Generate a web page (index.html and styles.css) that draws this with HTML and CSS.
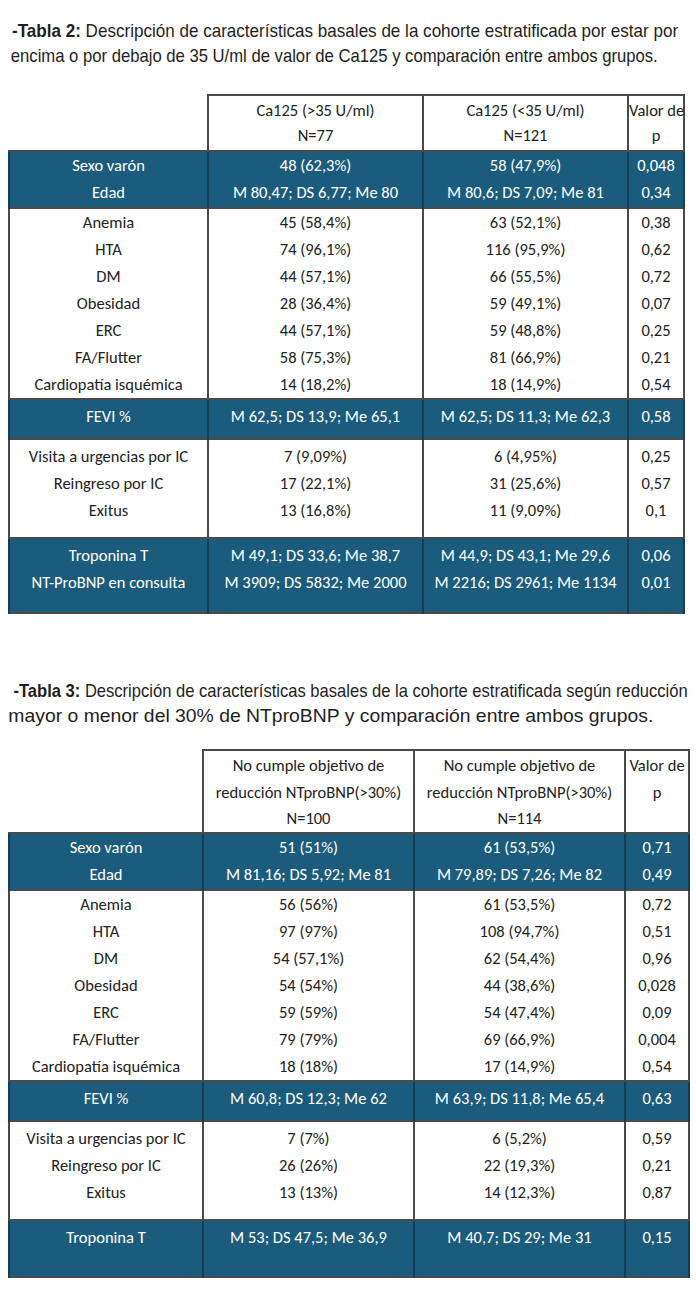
FILE: index.html
```html
<!DOCTYPE html>
<html lang="es">
<head>
<meta charset="utf-8">
<title>Tablas</title>
<link rel="stylesheet" href="styles.css">
</head>
<body>
<div class="page">
  <div class="caption cap2">
    <p class="line l1"><b>-Tabla 2:</b> Descripción de características basales de la cohorte estratificada por estar por</p>
    <p class="line l2">encima o por debajo de 35 U/ml de valor de Ca125 y comparación entre ambos grupos.</p>
  </div>
  <table class="data t2">
    <colgroup><col class="c1"><col class="c2"><col class="c3"><col class="c4"></colgroup>
    <thead>
      <tr><th class="blank"></th><th>Ca125 (&gt;35 U/ml)<br>N=77</th><th>Ca125 (&lt;35 U/ml)<br>N=121</th><th>Valor de<br>p</th></tr>
    </thead>
    <tbody class="dark g-a">
      <tr><td>Sexo varón</td><td>48 (62,3%)</td><td>58 (47,9%)</td><td>0,048</td></tr>
      <tr><td>Edad</td><td>M 80,47; DS 6,77; Me 80</td><td>M 80,6; DS 7,09; Me 81</td><td>0,34</td></tr>
    </tbody>
    <tbody class="light g-b">
      <tr><td>Anemia</td><td>45 (58,4%)</td><td>63 (52,1%)</td><td>0,38</td></tr>
      <tr><td>HTA</td><td>74 (96,1%)</td><td>116 (95,9%)</td><td>0,62</td></tr>
      <tr><td>DM</td><td>44 (57,1%)</td><td>66 (55,5%)</td><td>0,72</td></tr>
      <tr><td>Obesidad</td><td>28 (36,4%)</td><td>59 (49,1%)</td><td>0,07</td></tr>
      <tr><td>ERC</td><td>44 (57,1%)</td><td>59 (48,8%)</td><td>0,25</td></tr>
      <tr><td>FA/Flutter</td><td>58 (75,3%)</td><td>81 (66,9%)</td><td>0,21</td></tr>
      <tr><td>Cardiopatía isquémica</td><td>14 (18,2%)</td><td>18 (14,9%)</td><td>0,54</td></tr>
    </tbody>
    <tbody class="dark g-c">
      <tr><td>FEVI %</td><td>M 62,5; DS 13,9; Me 65,1</td><td>M 62,5; DS 11,3; Me 62,3</td><td>0,58</td></tr>
    </tbody>
    <tbody class="light g-d">
      <tr><td>Visita a urgencias por IC</td><td>7 (9,09%)</td><td>6 (4,95%)</td><td>0,25</td></tr>
      <tr><td>Reingreso por IC</td><td>17 (22,1%)</td><td>31 (25,6%)</td><td>0,57</td></tr>
      <tr><td>Exitus</td><td>13 (16,8%)</td><td>11 (9,09%)</td><td>0,1</td></tr>
    </tbody>
    <tbody class="dark g-e">
      <tr><td>Troponina T</td><td>M 49,1; DS 33,6; Me 38,7</td><td>M 44,9; DS 43,1; Me 29,6</td><td>0,06</td></tr>
      <tr><td>NT-ProBNP en consulta</td><td>M 3909; DS 5832; Me 2000</td><td>M 2216; DS 2961; Me 1134</td><td>0,01</td></tr>
    </tbody>
  </table>

  <div class="caption cap3">
    <p class="line l1"><b>-Tabla 3:</b> Descripción de características basales de la cohorte estratificada según reducción</p>
    <p class="line l2">mayor o menor del 30% de NTproBNP y comparación entre ambos grupos.</p>
  </div>
  <table class="data t3">
    <colgroup><col class="c1"><col class="c2"><col class="c3"><col class="c4"></colgroup>
    <thead>
      <tr><th class="blank"></th><th>No cumple objetivo de<br>reducción NTproBNP(&gt;30%)<br>N=100</th><th>No cumple objetivo de<br>reducción NTproBNP(&gt;30%)<br>N=114</th><th>Valor de<br>p<br>&nbsp;</th></tr>
    </thead>
    <tbody class="dark g-a">
      <tr><td>Sexo varón</td><td>51 (51%)</td><td>61 (53,5%)</td><td>0,71</td></tr>
      <tr><td>Edad</td><td>M 81,16; DS 5,92; Me 81</td><td>M 79,89; DS 7,26; Me 82</td><td>0,49</td></tr>
    </tbody>
    <tbody class="light g-b">
      <tr><td>Anemia</td><td>56 (56%)</td><td>61 (53,5%)</td><td>0,72</td></tr>
      <tr><td>HTA</td><td>97 (97%)</td><td>108 (94,7%)</td><td>0,51</td></tr>
      <tr><td>DM</td><td>54 (57,1%)</td><td>62 (54,4%)</td><td>0,96</td></tr>
      <tr><td>Obesidad</td><td>54 (54%)</td><td>44 (38,6%)</td><td>0,028</td></tr>
      <tr><td>ERC</td><td>59 (59%)</td><td>54 (47,4%)</td><td>0,09</td></tr>
      <tr><td>FA/Flutter</td><td>79 (79%)</td><td>69 (66,9%)</td><td>0,004</td></tr>
      <tr><td>Cardiopatía isquémica</td><td>18 (18%)</td><td>17 (14,9%)</td><td>0,54</td></tr>
    </tbody>
    <tbody class="dark g-c">
      <tr><td>FEVI %</td><td>M 60,8; DS 12,3; Me 62</td><td>M 63,9; DS 11,8; Me 65,4</td><td>0,63</td></tr>
    </tbody>
    <tbody class="light g-d">
      <tr><td>Visita a urgencias por IC</td><td>7 (7%)</td><td>6 (5,2%)</td><td>0,59</td></tr>
      <tr><td>Reingreso por IC</td><td>26 (26%)</td><td>22 (19,3%)</td><td>0,21</td></tr>
      <tr><td>Exitus</td><td>13 (13%)</td><td>14 (12,3%)</td><td>0,87</td></tr>
    </tbody>
    <tbody class="dark g-f">
      <tr><td>Troponina T</td><td>M 53; DS 47,5; Me 36,9</td><td>M 40,7; DS 29; Me 31</td><td>0,15</td></tr>
    </tbody>
  </table>
</div>
</body>
</html>
```

FILE: styles.css
```css
html, body {
  margin: 0;
  padding: 0;
  background: #ffffff;
}

.page {
  width: 696px;
  padding: 18px 0 0 0;
  box-sizing: border-box;
  overflow: hidden;
}

.caption {
  height: 50px;
  width: 696px;
  overflow: visible;
}

.line {
  margin: 0;
  width: 800px;
  height: 25px;
  white-space: nowrap;
  font-family: "Liberation Sans", Arial, sans-serif;
  font-size: 18.5px;
  line-height: 25px;
  color: #1e1e1e;
  transform-origin: 0 0;
}

.cap2 .l1 { padding-left: 13px; transform: scaleX(0.922); }
.cap2 .l2 { padding-left: 12px; transform: scaleX(0.900); }

.cap3 {
  margin-top: 64px;
}

.cap3 .l1 { padding-left: 15px; transform: scaleX(0.895); }
.cap3 .l2 { padding-left: 8px; transform: scaleX(1.046); }

.data {
  border-collapse: collapse;
  table-layout: fixed;
  margin-left: 8px;
  font-family: "Carlito", "Lato", "Open Sans", sans-serif;
  font-size: 16.5px;
  color: #222222;
}

.t2 {
  width: 675px;
  margin-top: 26px;
}

.t3 {
  width: 680px;
  margin-top: 21px;
}

.t2 .c1 { width: 199px; }
.t2 .c2 { width: 215px; }
.t2 .c3 { width: 205px; }
.t2 .c4 { width: 56px; }

.t3 .c1 { width: 194px; }
.t3 .c2 { width: 211px; }
.t3 .c3 { width: 211px; }
.t3 .c4 { width: 64px; }

.data th {
  font-weight: normal;
  text-align: center;
  vertical-align: top;
  border: 2px solid #4a4a4a;
  padding: 2px 0 2px 0;
  line-height: 25px;
  white-space: nowrap;
}

.t3 th {
  line-height: 26.5px;
  padding: 1px 0 0 0;
}

.data th.blank {
  border: none;
  border-bottom: 2px solid #4a4a4a;
}

.data td {
  text-align: center;
  padding: 0;
  line-height: 27px;
  white-space: nowrap;
  border-left: 2px solid #4a4a4a;
  border-right: 2px solid #4a4a4a;
}

.data tbody {
  border: 2px solid #4a4a4a;
}

.dark td {
  background: #1b5b7c;
  color: #ffffff;
  border-left-color: #123f57;
  border-right-color: #123f57;
}

.light td {
  background: #ffffff;
}

/* group vertical paddings */
.g-a tr:first-child td { padding-top: 0; }
.g-a tr:last-child td { padding-bottom: 1px; }

.g-b tr:first-child td { padding-top: 0; }
.g-b tr:last-child td { padding-bottom: 0; }

.g-c td { padding-top: 3px; padding-bottom: 8px; }

.g-d tr:first-child td { padding-top: 3px; }
.g-d tr:last-child td { padding-bottom: 13px; }

.g-e tr:first-child td { padding-top: 3px; }
.g-e tr:last-child td { padding-bottom: 16px; }

.g-f td { padding-top: 3px; padding-bottom: 25px; }
```
